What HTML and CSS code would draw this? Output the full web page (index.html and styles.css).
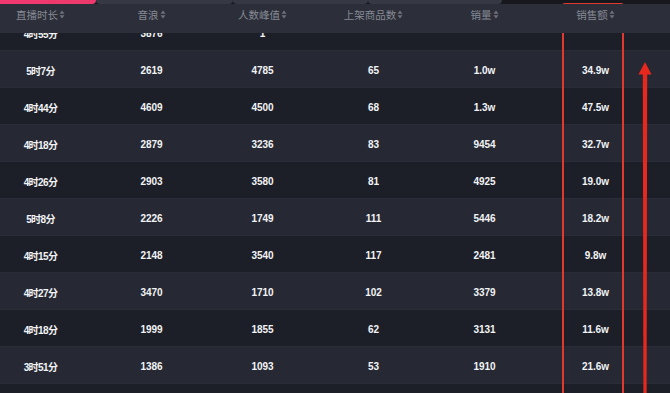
FILE: index.html
```html
<!DOCTYPE html>
<html lang="zh-CN">
<head>
<meta charset="utf-8">
<title>直播数据</title>
<link rel="stylesheet" href="styles.css">
</head>
<body>
<div class="tabs">
  <div class="tab tab-active"></div>
  <div class="tab tab-2"></div>
  <div class="tab tab-3"></div>
  <div class="tab tab-4"></div>
</div>
<div class="table">
  <div class="thead">
    <div class="th">直播时长<svg class="sort" viewBox="0 0 6 9"><path d="M3 0.5L5.5 3.8H0.5Z M3 8.5L5.5 5.2H0.5Z"/></svg></div>
    <div class="th">音浪<svg class="sort" viewBox="0 0 6 9"><path d="M3 0.5L5.5 3.8H0.5Z M3 8.5L5.5 5.2H0.5Z"/></svg></div>
    <div class="th">人数峰值<svg class="sort" viewBox="0 0 6 9"><path d="M3 0.5L5.5 3.8H0.5Z M3 8.5L5.5 5.2H0.5Z"/></svg></div>
    <div class="th">上架商品数<svg class="sort" viewBox="0 0 6 9"><path d="M3 0.5L5.5 3.8H0.5Z M3 8.5L5.5 5.2H0.5Z"/></svg></div>
    <div class="th">销量<svg class="sort" viewBox="0 0 6 9"><path d="M3 0.5L5.5 3.8H0.5Z M3 8.5L5.5 5.2H0.5Z"/></svg></div>
    <div class="th">销售额<svg class="sort" viewBox="0 0 6 9"><path d="M3 0.5L5.5 3.8H0.5Z M3 8.5L5.5 5.2H0.5Z"/></svg></div>
    <div class="th"></div>
  </div>
  <div class="tbody">
    <div class="rows">
      <div class="tr dark"><div class="td">4时55分</div><div class="td">3876</div><div class="td">1</div><div class="td"></div><div class="td"></div><div class="td"></div><div class="td"></div></div>
      <div class="tr light"><div class="td">5时7分</div><div class="td">2619</div><div class="td">4785</div><div class="td">65</div><div class="td">1.0w</div><div class="td">34.9w</div><div class="td"></div></div>
      <div class="tr dark"><div class="td">4时44分</div><div class="td">4609</div><div class="td">4500</div><div class="td">68</div><div class="td">1.3w</div><div class="td">47.5w</div><div class="td"></div></div>
      <div class="tr light"><div class="td">4时18分</div><div class="td">2879</div><div class="td">3236</div><div class="td">83</div><div class="td">9454</div><div class="td">32.7w</div><div class="td"></div></div>
      <div class="tr dark"><div class="td">4时26分</div><div class="td">2903</div><div class="td">3580</div><div class="td">81</div><div class="td">4925</div><div class="td">19.0w</div><div class="td"></div></div>
      <div class="tr light"><div class="td">5时8分</div><div class="td">2226</div><div class="td">1749</div><div class="td">111</div><div class="td">5446</div><div class="td">18.2w</div><div class="td"></div></div>
      <div class="tr dark"><div class="td">4时15分</div><div class="td">2148</div><div class="td">3540</div><div class="td">117</div><div class="td">2481</div><div class="td">9.8w</div><div class="td"></div></div>
      <div class="tr light"><div class="td">4时27分</div><div class="td">3470</div><div class="td">1710</div><div class="td">102</div><div class="td">3379</div><div class="td">13.8w</div><div class="td"></div></div>
      <div class="tr dark"><div class="td">4时18分</div><div class="td">1999</div><div class="td">1855</div><div class="td">62</div><div class="td">3131</div><div class="td">11.6w</div><div class="td"></div></div>
      <div class="tr light"><div class="td">3时51分</div><div class="td">1386</div><div class="td">1093</div><div class="td">53</div><div class="td">1910</div><div class="td">21.6w</div><div class="td"></div></div>
      <div class="tr dark"><div class="td">4时2分</div><div class="td">1520</div><div class="td">1320</div><div class="td">60</div><div class="td">2050</div><div class="td">15.3w</div><div class="td"></div></div>
    </div>
  </div>
</div>
<div class="highlight-box"></div>
<svg class="arrow" viewBox="0 0 20 333" width="20" height="333">
  <polygon points="9,2 2.5,14.5 15.5,14.5" />
  <polygon points="6.8,13 11.2,13 10.6,333 7.4,333" />
</svg>
</body>
</html>
```

FILE: styles.css
```css
html, body {
  margin: 0;
  padding: 0;
  width: 670px;
  height: 393px;
  overflow: hidden;
  background: #1d1f27;
}

body {
  position: relative;
  font-family: "Liberation Sans", "Noto Sans CJK SC", sans-serif;
}

.tabs {
  display: flex;
  height: 4px;
  background: #17181d;
}

.tab {
  height: 4px;
  border-radius: 0 0 4px 4px;
}

.tab-active {
  width: 96px;
  background: linear-gradient(90deg, #f2386f, #ec3a6c);
  border-radius: 0 0 4px 0;
}

.tab-2 { width: 137px; background: #363943; }
.tab-3 { width: 135px; background: #363943; }
.tab-4 { width: 134px; background: #363943; }

.table {
  margin-left: -15px;
  width: 685px;
}

.thead {
  display: grid;
  grid-template-columns: repeat(6, 111px) 1fr;
  height: 29px;
  background: #2c2f39;
  position: relative;
  z-index: 1;
}

.th {
  display: flex;
  justify-content: center;
  align-items: center;
  height: 12px;
  margin-top: 4px;
  font-family: "Noto Sans CJK SC", sans-serif;
  font-size: 10.5px;
  color: #868a95;
  white-space: nowrap;
}

.sort {
  width: 6px;
  height: 9px;
  margin-left: 1px;
  fill: #6d717c;
}

.tbody {
  height: 360px;
  overflow: hidden;
}

.rows {
  margin-top: -20px;
}

.tr {
  display: grid;
  grid-template-columns: repeat(6, 111px) 1fr;
  height: 37px;
  box-sizing: border-box;
  align-items: center;
  border-top: 1px solid #2a2d38;
}

.tr.light { background: #262934; }
.tr.dark { background: #1d1f28; }

.td {
  text-align: center;
  font-size: 10px;
  font-weight: bold;
  color: #f2f3f5;
  padding-top: 2px;
  white-space: nowrap;
}

.td:first-child {
  letter-spacing: -0.6px;
}

.highlight-box {
  position: absolute;
  left: 562px;
  top: 3px;
  width: 58px;
  height: 400px;
  border: 2px solid #e0392e;
  border-radius: 3px;
}

.arrow {
  position: absolute;
  left: 636px;
  top: 60px;
  fill: #e8281d;
}
```
